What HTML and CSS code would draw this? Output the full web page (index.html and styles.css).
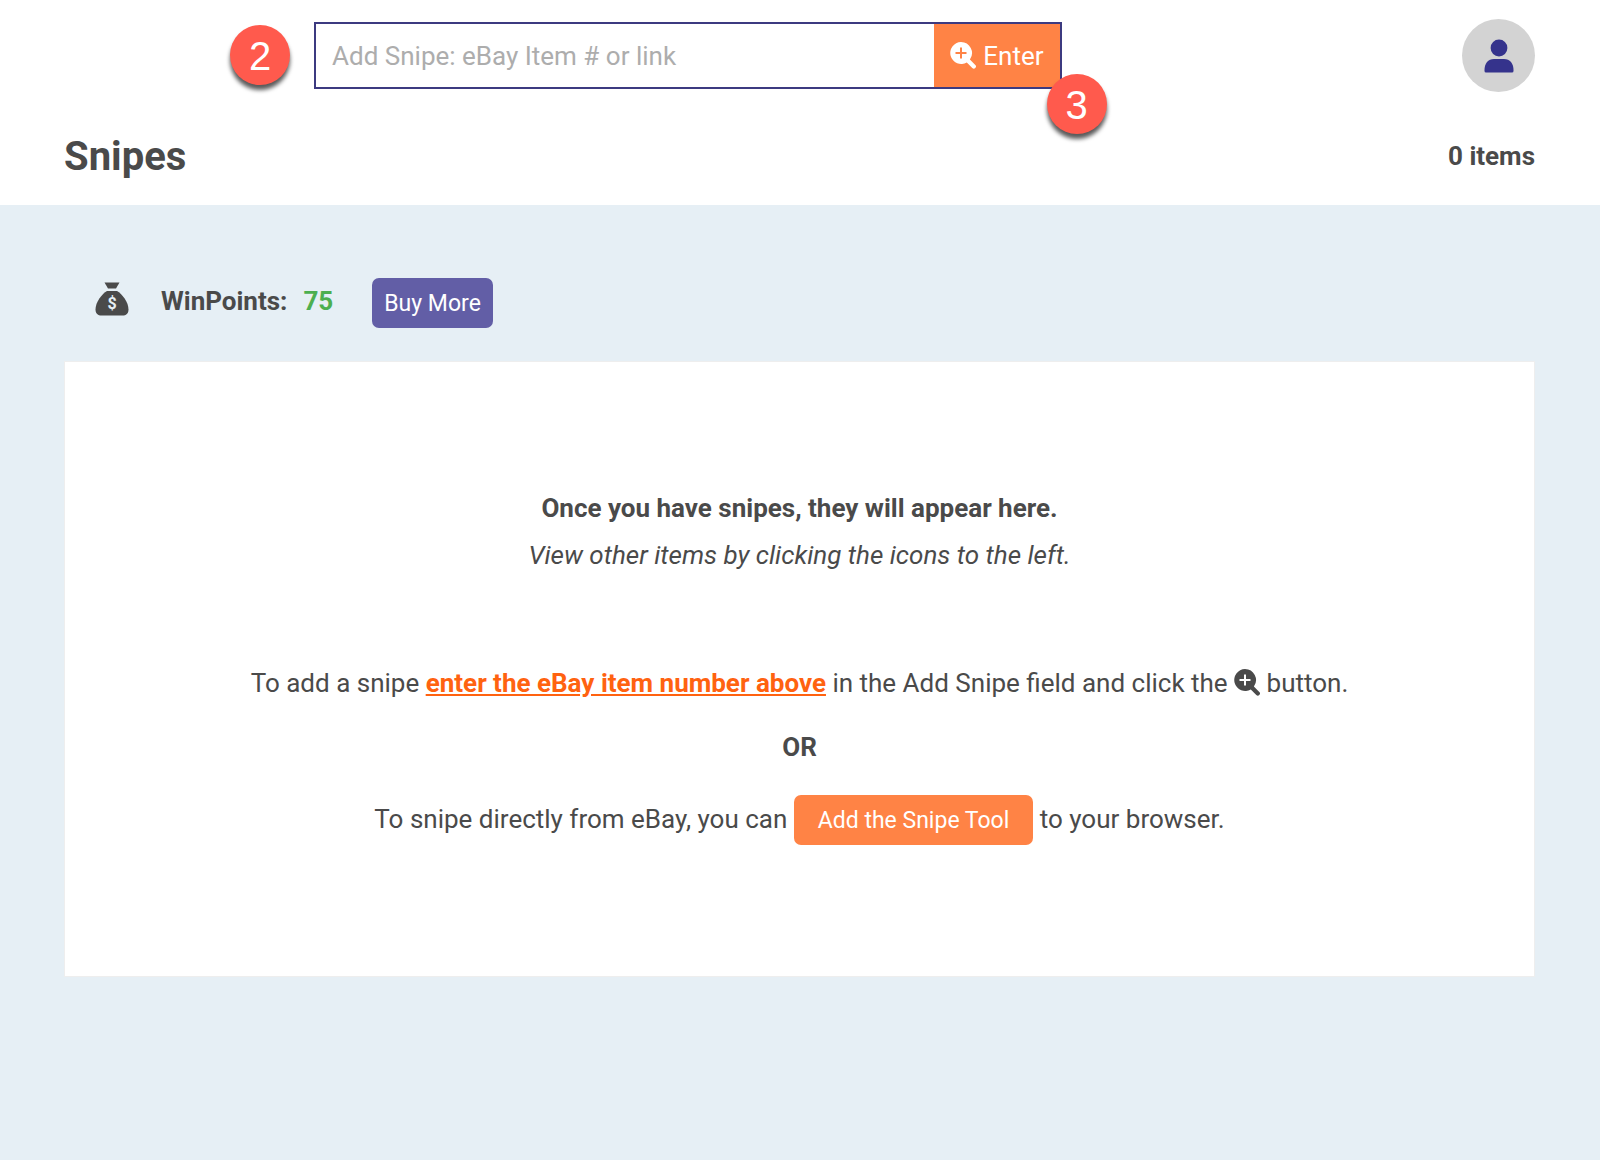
FILE: index.html
```html
<!DOCTYPE html>
<html lang="en">
<head>
    <meta charset="UTF-8">
    <meta name="viewport" content="width=device-width, initial-scale=1.0">
    <title>Snipes</title>
    <link rel="stylesheet" href="styles.css">
</head>
<body>
    <!-- Shared icon, used in the search button and in the help text -->
    <svg class="icon-defs" aria-hidden="true">
        <symbol id="zoom-in" viewBox="0 0 26 27">
            <path fill="currentColor" fill-rule="evenodd" d="M11 0a11 11 0 0 1 8.9 17.4l5.4 5.5a2.1 2.1 0 0 1-3 3l-5.5-5.4A11 11 0 1 1 11 0zM10 5.500v4.500h-4.500v2h4.500v4.500h2v-4.500h4.500v-2h-4.500v-4.500z"/>
        </symbol>
    </svg>

    <!-- Header -->
    <header class="header">
        <div class="top-bar">
            <form class="search" onsubmit="return false">
                <input type="text" class="search-input" aria-label="Add Snipe" placeholder="Add Snipe: eBay Item # or link" id="snipeInput">
                <button type="submit" class="search-button">
                    <svg class="zoom-icon" aria-hidden="true"><use href="#zoom-in"/></svg>
                    Enter
                </button>
                <span class="badge badge-left">2</span>
                <span class="badge badge-corner">3</span>
            </form>
            <button class="avatar" aria-label="Account">
                <svg class="avatar-icon" viewBox="0 0 30 34" aria-hidden="true">
                    <circle cx="15" cy="9" r="8.400"/>
                    <path d="M10 20h10c6 0 9.500 4.500 9.500 11v1q0 1.500-1.500 1.500H2Q.5 33.500.5 32v-1C.5 24.500 4 20 10 20z"/>
                </svg>
            </button>
        </div>
        <div class="title-bar">
            <h1 class="title">Snipes</h1>
            <div class="item-count">0 items</div>
        </div>
    </header>

    <main class="content">
        <!-- WinPoints -->
        <div class="points">
            <svg class="sack-icon" viewBox="0 0 34 34" aria-hidden="true">
                <path d="M9.500.5h15L21 6.500h-8z"/>
                <path d="M12 9h10c5 3 11.500 11 11.500 18.500 0 4-2.500 6-6 6h-21c-3.500 0-6-2-6-6C.5 20 7 12 12 9z"/>
                <text x="17" y="27" class="sack-sign">$</text>
            </svg>
            <span class="points-label">WinPoints:</span>
            <span class="points-value">75</span>
            <button class="button button-purple">Buy More</button>
        </div>

        <!-- Empty list message -->
        <section class="card">
            <p class="line"><strong>Once you have snipes, they will appear here.</strong></p>
            <p class="line"><em>View other items by clicking the icons to the left.</em></p>
            <p class="line line-add">To add a snipe <a href="#snipeInput" class="link">enter the eBay item number above</a> in the Add Snipe field and click the <svg class="zoom-icon" aria-hidden="true"><use href="#zoom-in"/></svg> button.</p>
            <p class="line line-or"><strong>OR</strong></p>
            <p class="line line-tool">To snipe directly from eBay, you can <button class="button button-orange">Add the Snipe Tool</button> to your browser.</p>
        </section>
    </main>
</body>
</html>
```
FILE: styles.css
```css
* {
    box-sizing: border-box;
}

body {
    margin: 0;
    min-height: 100vh;
    background-color: #e6eff5;
    color: #4a4a4a;
    font-family: Roboto, Arial, sans-serif;
    font-size: 26px;
    line-height: 47px;
}

button,
input {
    font-family: inherit;
}

button {
    border: none;
    cursor: pointer;
}

.icon-defs {
    display: none;
}

/* Header */
.header {
    background: white;
    padding: 19px 65px 22px 64px;
}

.top-bar {
    display: grid;
    grid-template-columns: 3fr 1.9fr;
    align-items: center;
    padding-left: 17%;
}

.search {
    position: relative;
    display: flex;
    height: 67px;
    border: 2px solid #3c3a80;
}

.search-input {
    flex: 1;
    min-width: 0;
    border: none;
    outline: none;
    padding: 0 16px;
    font-size: 26px;
    color: #4a4a4a;
}

.search-input::placeholder {
    color: #adadad;
}

.search-button {
    display: flex;
    align-items: center;
    gap: 7px;
    padding: 0 16px;
    background-color: #ff8345;
    color: white;
    font-size: 26px;
}

.zoom-icon {
    width: 26px;
    height: 27px;
}

.avatar {
    justify-self: end;
    display: flex;
    align-items: center;
    justify-content: center;
    width: 73px;
    height: 73px;
    padding: 0;
    border-radius: 50%;
    background-color: #d3d3d3;
}

.avatar-icon {
    width: 30px;
    height: 34px;
    fill: #35338c;
}

/* Numbered markers over the search box */
.badge {
    position: absolute;
    width: 60px;
    height: 60px;
    border-radius: 50%;
    background-color: #ff5a4d;
    box-shadow: 0 5px 4px rgba(0,0,0,0.65);
    color: white;
    font-family: "Liberation Sans", Arial, sans-serif;
    font-size: 40px;
    line-height: 62px;
    text-align: center;
}

.badge-left {
    left: -86px;
    top: 1px;
}

.badge-corner {
    right: -47px;
    bottom: -47px;
}

.title-bar {
    display: flex;
    justify-content: space-between;
    align-items: center;
    margin-top: 38px;
}

.title {
    margin: 0;
    font-size: 40px;
    line-height: 53px;
}

.item-count {
    font-weight: bold;
}

/* Content */
.content {
    padding: 73px 65px 64px 64px;
}

.points {
    display: flex;
    align-items: flex-start;
    padding-left: 31px;
    margin-bottom: 33px;
    font-weight: bold;
}

.sack-icon {
    width: 34px;
    height: 34px;
    margin-top: 4px;
    fill: #4a4a4a;
}

.sack-icon .sack-sign {
    fill: #e6eff5;
    font-size: 16px;
    text-anchor: middle;
}

.points-label {
    margin-left: 32px;
}

.points-value {
    margin: 0 39px 0 16px;
    color: #4caf50;
}

.button {
    height: 50px;
    border-radius: 7px;
    color: white;
    font-size: 23px;
}

.button-purple {
    padding: 0 12px;
    background-color: #625ea6;
}

.button-orange {
    padding: 0 24px;
    background-color: #ff8345;
}

.card {
    padding: 123px 32px 131px;
    background: white;
    border: 1px solid #eeeeee;
    text-align: center;
}

.line {
    margin: 0;
}

.line .zoom-icon {
    vertical-align: -4px;
}

.line-add {
    margin-top: 81px;
}

.line-or {
    margin-top: 17px;
}

.line-tool {
    margin-top: 24px;
}

.link {
    color: #ff6210;
    font-weight: bold;
}
```
